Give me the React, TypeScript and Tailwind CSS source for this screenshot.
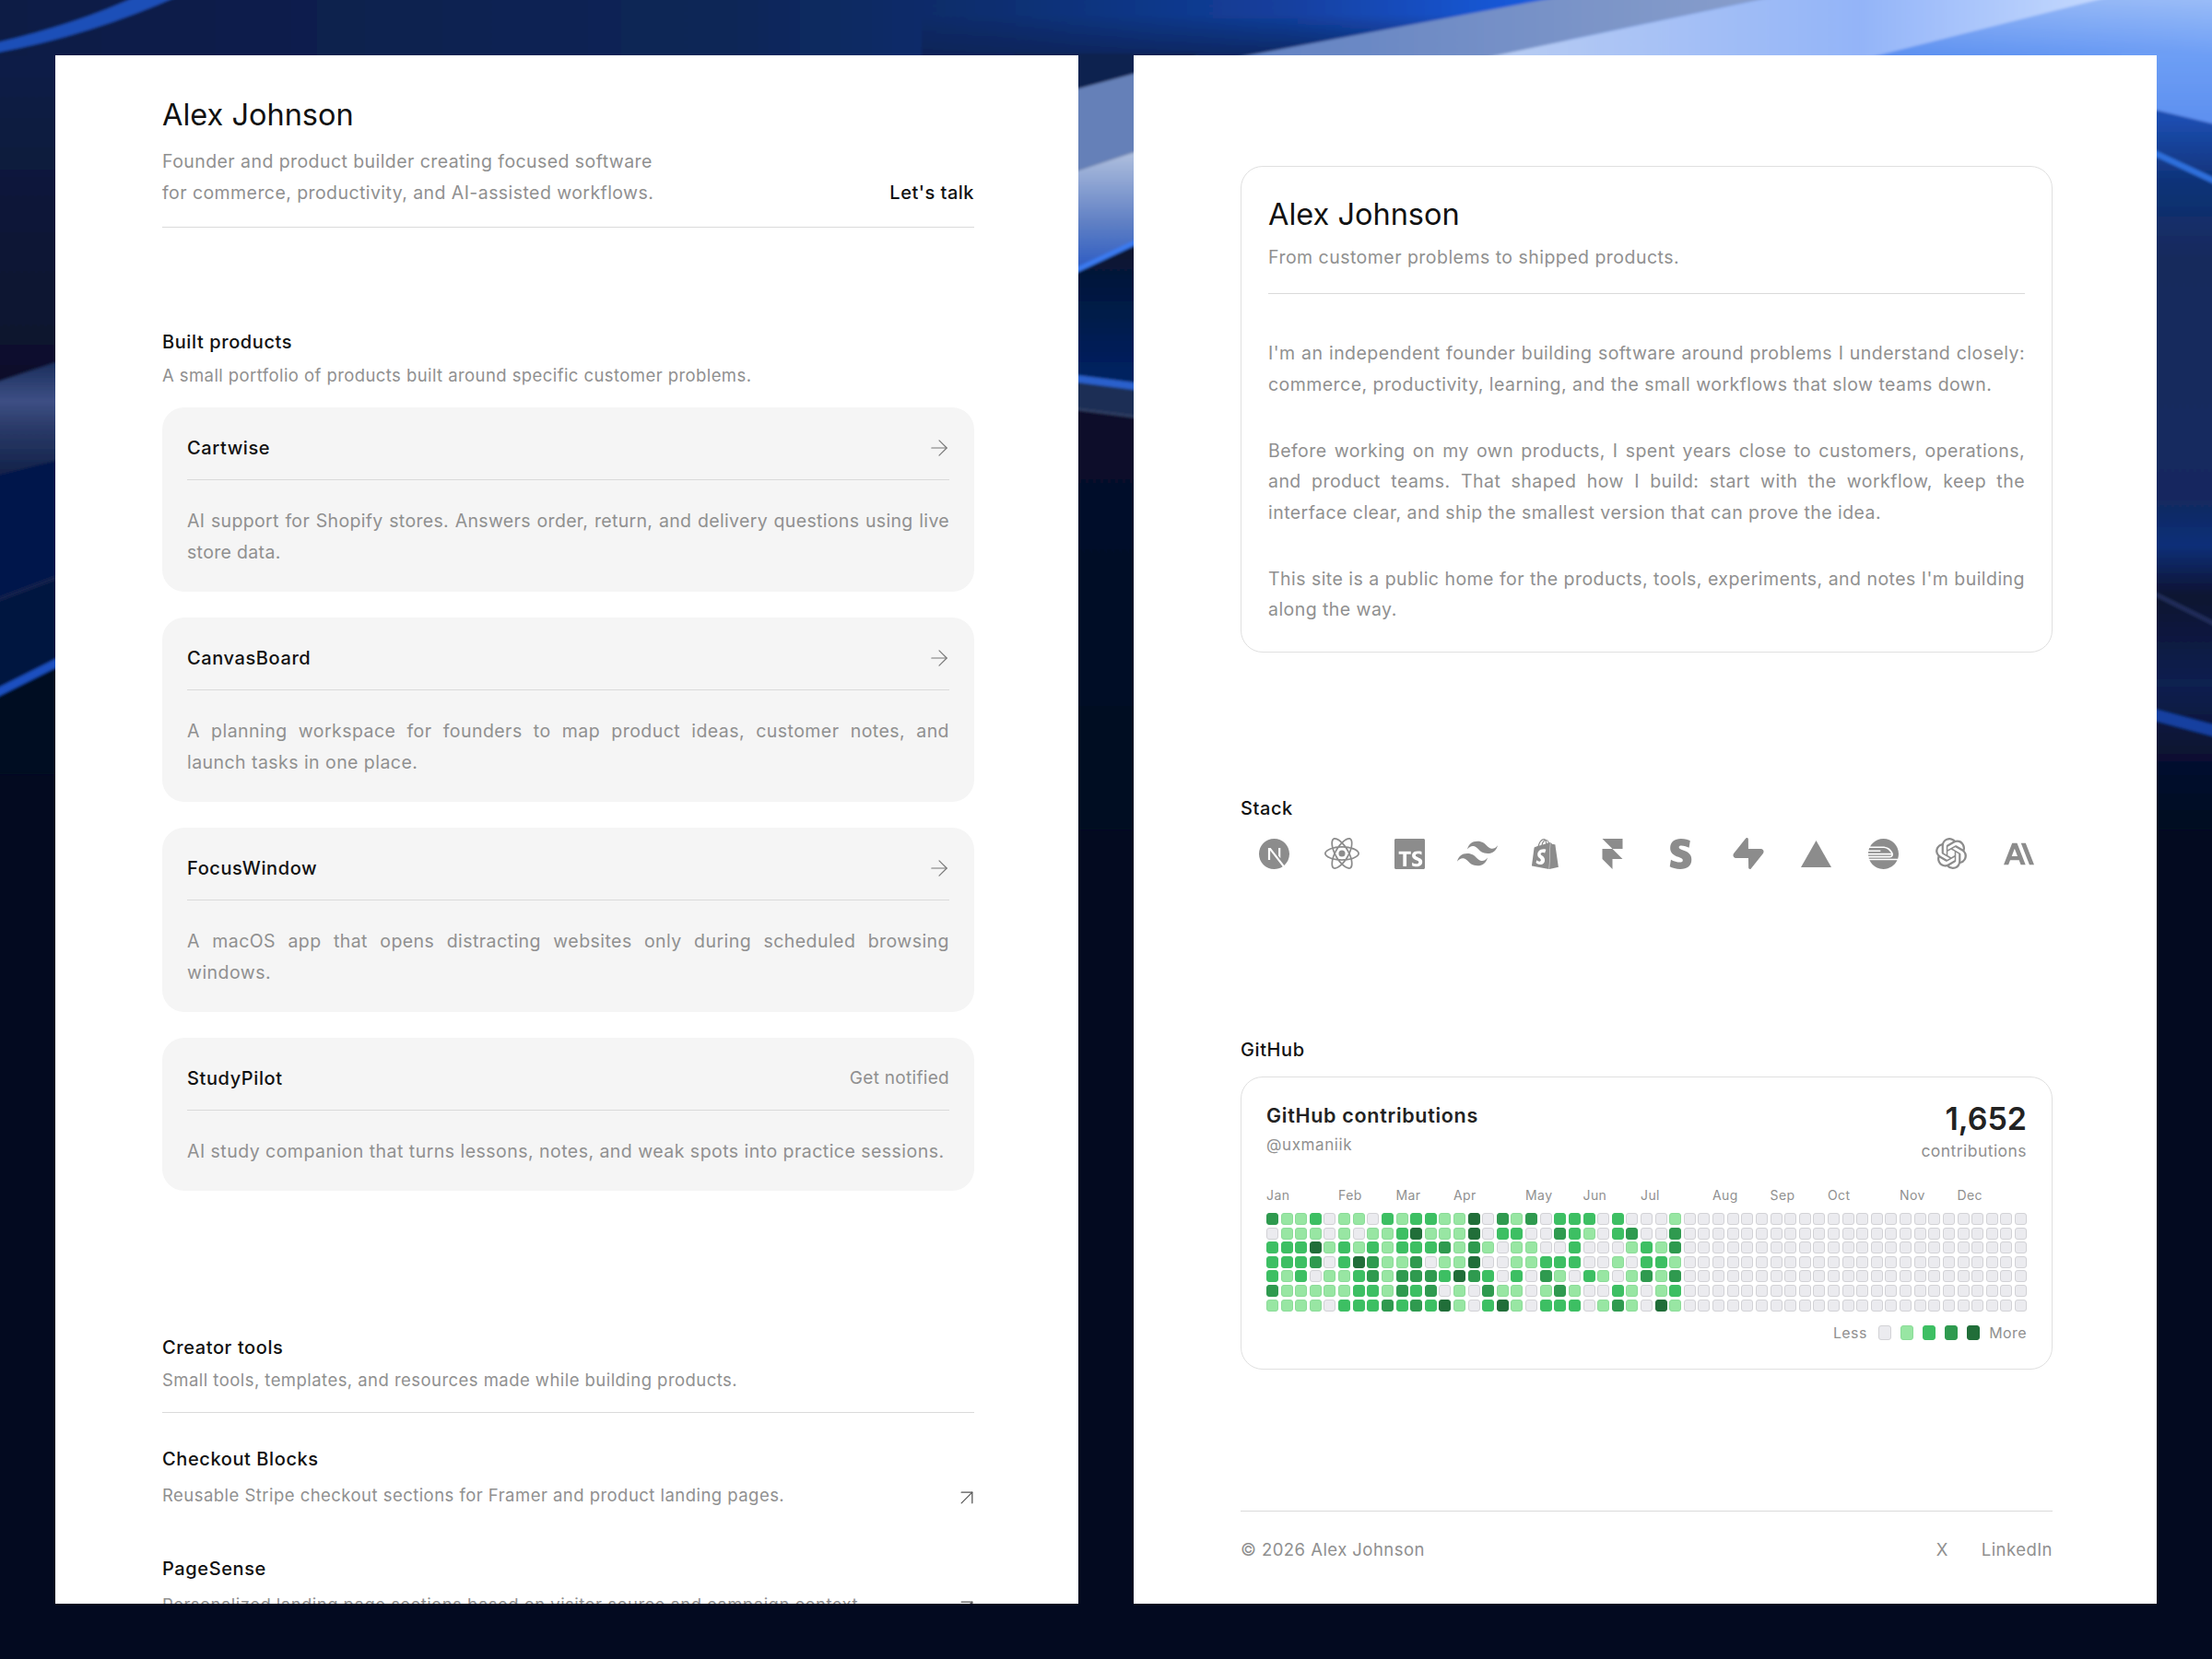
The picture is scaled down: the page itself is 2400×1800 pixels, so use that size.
import { ArrowRight, ArrowUpRight } from 'lucide-react';
import {
  SiNextdotjs,
  SiReact,
  SiTypescript,
  SiTailwindcss,
  SiShopify,
  SiFramer,
  SiStripe,
  SiSupabase,
  SiVercel,
  SiRailway,
  SiOpenai,
  SiAnthropic,
} from 'react-icons/si';

const products = [
  {
    name: 'Cartwise',
    desc: 'AI support for Shopify stores. Answers order, return, and delivery questions using live store data.',
    descClass: 'tracking-[0.33px]',
  },
  {
    name: 'CanvasBoard',
    desc: 'A planning workspace for founders to map product ideas, customer notes, and launch tasks in one place.',
    descClass: 'tracking-[0.45px]',
  },
  {
    name: 'FocusWindow',
    desc: 'A macOS app that opens distracting websites only during scheduled browsing windows.',
    descClass: 'tracking-[0.45px]',
  },
  {
    name: 'StudyPilot',
    desc: 'AI study companion that turns lessons, notes, and weak spots into practice sessions.',
    descClass: 'tracking-[0.47px]',
    soon: true,
  },
];

const tools = [
  { name: 'Checkout Blocks', desc: 'Reusable Stripe checkout sections for Framer and product landing pages.' },
  { name: 'PageSense', desc: 'Personalized landing page sections based on visitor source and campaign context.' },
];

const stack = [
  { Icon: SiNextdotjs, size: 33 },
  { Icon: SiReact, size: 38 },
  { Icon: SiTypescript, size: 33 },
  { Icon: SiTailwindcss, size: 44 },
  { Icon: SiShopify, size: 33 },
  { Icon: SiFramer, size: 33 },
  { Icon: SiStripe, size: 33 },
  { Icon: SiSupabase, size: 34 },
  { Icon: SiVercel, size: 33 },
  { Icon: SiRailway, size: 33 },
  { Icon: SiOpenai, size: 34 },
  { Icon: SiAnthropic, size: 33 },
];

const months = [
  { label: 'Jan', col: 0 },
  { label: 'Feb', col: 5 },
  { label: 'Mar', col: 9 },
  { label: 'Apr', col: 13 },
  { label: 'May', col: 18 },
  { label: 'Jun', col: 22 },
  { label: 'Jul', col: 26 },
  { label: 'Aug', col: 31 },
  { label: 'Sep', col: 35 },
  { label: 'Oct', col: 39 },
  { label: 'Nov', col: 44 },
  { label: 'Dec', col: 48 },
];

const rows = [
  '31120110212211403130222020001',
  '01110101124111402200321023003',
  '22241212122231310110020001213',
  '22230243113011400112220010221',
  '21201123133324320203102101313',
  '31111122132301031101310021012',
  '11110222323241024102220131041',
];

const levels = [
  'bg-[#ebebef] border border-[#d2d2d6]',
  'bg-[#98e6a3] border border-[#8bdc98]',
  'bg-[#3dbf63] border border-[#3dbf63]',
  'bg-[#2f9a4f] border border-[#2f9a4f]',
  'bg-[#216e39] border border-[#216e39]',
];

const cells = rows.flatMap((row) => row.padEnd(53, '0').split('').map(Number));

function Wallpaper() {
  return (
    <svg viewBox="0 0 2400 1800" className="absolute inset-0 w-full h-full">
      <defs>
        <linearGradient id="topBlue" x1="0" y1="0" x2="1" y2="0">
          <stop offset="0" stopColor="#0a1a44" />
          <stop offset="0.2" stopColor="#0d2150" />
          <stop offset="0.33" stopColor="#0f2656" />
          <stop offset="0.45" stopColor="#0f2e70" />
          <stop offset="0.58" stopColor="#123f9e" />
          <stop offset="0.68" stopColor="#1758d8" />
          <stop offset="0.84" stopColor="#5b8ff0" />
          <stop offset="1" stopColor="#6e9ff5" />
        </linearGradient>
        <linearGradient id="topShade" gradientUnits="userSpaceOnUse" x1="0" y1="15" x2="0" y2="60">
          <stop offset="0" stopColor="#0a2050" stopOpacity="0" />
          <stop offset="1" stopColor="#0a2050" stopOpacity="0.75" />
        </linearGradient>
        <linearGradient id="topGlow" gradientUnits="userSpaceOnUse" x1="0" y1="0" x2="0" y2="60">
          <stop offset="0" stopColor="#ffffff" stopOpacity="0.3" />
          <stop offset="1" stopColor="#ffffff" stopOpacity="0" />
        </linearGradient>
        <linearGradient id="greyBand" x1="0" y1="0" x2="1" y2="0">
          <stop offset="0" stopColor="#5f80c2" />
          <stop offset="1" stopColor="#8a9fcb" />
        </linearGradient>
        <linearGradient id="lightBand" x1="0" y1="0" x2="1" y2="0">
          <stop offset="0" stopColor="#bccff2" />
          <stop offset="0.6" stopColor="#93b4f8" />
          <stop offset="1" stopColor="#cbdeff" />
        </linearGradient>
        <linearGradient id="leftBase" gradientUnits="userSpaceOnUse" x1="0" y1="55" x2="0" y2="400">
          <stop offset="0" stopColor="#0d1d48" />
          <stop offset="0.5" stopColor="#0a1838" />
          <stop offset="1" stopColor="#07102c" />
        </linearGradient>
        <linearGradient id="leftBand" gradientUnits="userSpaceOnUse" x1="0" y1="395" x2="0" y2="510">
          <stop offset="0" stopColor="#1c2f5e" />
          <stop offset="0.35" stopColor="#3d4f84" />
          <stop offset="0.6" stopColor="#2a3a68" />
          <stop offset="1" stopColor="#14244c" />
        </linearGradient>
        <linearGradient id="gapBand" gradientUnits="userSpaceOnUse" x1="0" y1="170" x2="0" y2="290">
          <stop offset="0" stopColor="#aabbdc" />
          <stop offset="0.6" stopColor="#5f7fc4" />
          <stop offset="1" stopColor="#2e5cc2" />
        </linearGradient>
        <linearGradient id="gapLow" gradientUnits="userSpaceOnUse" x1="0" y1="280" x2="0" y2="400">
          <stop offset="0" stopColor="#071533" />
          <stop offset="1" stopColor="#00205e" />
        </linearGradient>
        <linearGradient id="gapDark" gradientUnits="userSpaceOnUse" x1="0" y1="440" x2="0" y2="860">
          <stop offset="0" stopColor="#070e2c" />
          <stop offset="1" stopColor="#030822" />
        </linearGradient>
        <linearGradient id="rightLight" gradientUnits="userSpaceOnUse" x1="0" y1="55" x2="0" y2="130">
          <stop offset="0" stopColor="#6e9ff5" />
          <stop offset="1" stopColor="#5e90f0" />
        </linearGradient>
        <linearGradient id="rightDeep" gradientUnits="userSpaceOnUse" x1="0" y1="110" x2="0" y2="900">
          <stop offset="0.025" stopColor="#1c4db0" />
          <stop offset="0.11" stopColor="#0f3278" />
          <stop offset="0.215" stopColor="#142a5c" />
          <stop offset="0.545" stopColor="#12285e" />
          <stop offset="0.61" stopColor="#0e2f78" />
          <stop offset="0.68" stopColor="#0b1230" />
          <stop offset="0.8" stopColor="#0e2050" />
          <stop offset="0.886" stopColor="#071233" />
          <stop offset="1" stopColor="#030a20" />
        </linearGradient>
        <filter id="soft">
          <feGaussianBlur stdDeviation="1.5" />
        </filter>
      </defs>
      <rect width="2400" height="1800" fill="#030a20" />
      <g filter="url(#soft)">
        {/* top strip */}
        <rect x="-20" y="-20" width="2440" height="90" fill="url(#topBlue)" />
        <rect x="1000" y="15" width="700" height="55" fill="url(#topShade)" />
        <rect x="2000" y="-20" width="420" height="80" fill="url(#topGlow)" />
        <path d="M-20 50 Q80 28 150 -5 L195 -5 Q90 42 -20 60 Z" fill="#1c4fb8" />
        <path d="M1301 70 L1727 -10 L1955 -10 L1575 70 Z" fill="url(#greyBand)" />
        <path d="M1575 70 L1955 -10 L2315 -10 L1998 70 Z" fill="url(#lightBand)" />

        {/* left strip */}
        <rect x="-20" y="62" width="120" height="760" fill="url(#leftBase)" />
        <path d="M-20 420 L100 380 V490 L-20 520 Z" fill="url(#leftBand)" />
        <path d="M-20 520 L100 490 V620 L-20 655 Z" fill="#04184c" />
        <path d="M-20 655 L100 610 V705 L-20 755 Z" fill="#021240" />
        <path d="M-20 655 L100 610 V614 L-20 659 Z" fill="#14244e" />
        <path d="M-20 755 L100 695 V705 L-20 765 Z" fill="#1a50c0" />
        <path d="M-20 765 L100 705 V840 H-20 Z" fill="#030a20" />

        {/* gap between panels */}
        <rect x="1100" y="58" width="200" height="100" fill="#0f2350" />
        <path d="M1100 115 L1300 61 V142 L1100 208 Z" fill="#6580b8" />
        <path d="M1100 208 L1300 142 V231 L1100 325 Z" fill="url(#gapBand)" />
        <path d="M1100 325 L1300 231 V440 H1100 Z" fill="url(#gapLow)" />
        <path d="M1100 322 L1300 228 V234 L1100 328 Z" fill="#3a7af0" />
        <path d="M1100 404 L1300 430 V462 L1100 436 Z" fill="#1a2d55" />
        <path d="M1100 398 L1300 424 V432 L1100 406 Z" fill="#2a60cc" />
        <path d="M1100 434 L1300 460 V900 H1100 Z" fill="url(#gapDark)" />
        <path d="M1100 434 L1300 460 V462 L1100 436 Z" fill="#3a4a70" />

        {/* right strip */}
        <rect x="2300" y="58" width="150" height="100" fill="url(#rightLight)" />
        <path d="M2300 110 L2450 146 V900 H2300 Z" fill="url(#rightDeep)" />
        <path d="M2300 145 L2450 215 V222 L2300 152 Z" fill="#2f6fdc" />
        <path d="M2300 623 L2450 698 V703 L2300 628 Z" fill="#232f5c" />
        <path d="M2300 759 L2450 799 V812 L2300 772 Z" fill="#123fa0" />
      </g>
    </svg>
  );
}

function SectionTitle({ children }: { children: React.ReactNode }) {
  return <h2 className="text-[20px] leading-[28px] font-medium text-[#111] tracking-[0.6px]">{children}</h2>;
}

function ProductCard({ name, desc, descClass, soon }: { name: string; desc: string; descClass: string; soon?: boolean }) {
  return (
    <div className="bg-[#f5f5f5] rounded-3xl px-[27px] pt-[30px] pb-[26px]">
      <div className="flex items-center justify-between pb-[20px] border-b border-[#dadada] h-[49px]">
        <span className="text-[20px] leading-[28px] font-medium text-[#111] tracking-[0.6px]">{name}</span>
        {soon ? (
          <span className="text-[19px] leading-[28px] text-[#909090] tracking-[0.3px]">Get notified</span>
        ) : (
          <ArrowRight size={28} strokeWidth={1} className="text-[#777] -mr-[3px]" />
        )}
      </div>
      <p className={`mt-[27px] text-[19.5px] leading-[34px] text-[#909090] text-justify ${descClass}`}>{desc}</p>
    </div>
  );
}

export default function App() {
  return (
    <div className="relative w-[2400px] h-[1800px] overflow-hidden bg-[#030a20] font-['Inter',sans-serif]">
      <Wallpaper />
      <div className="relative flex gap-[60px] p-[60px]">
        <div className="w-[1110px] h-[1680px] bg-white overflow-hidden pl-[116px] pr-[113px] pt-[45px]">
          <h1 className="text-[32.5px] leading-[40px] font-normal text-[#111]">Alex Johnson</h1>
          <div className="flex items-end justify-between mt-[13px] pb-[20px] border-b border-[#dadada]">
            <p className="text-[19.5px] leading-[34px] text-[#909090] tracking-[0.43px]">
              Founder and product builder creating focused software
              <br />
              for commerce, productivity, and AI-assisted workflows.
            </p>
            <span className="text-[20px] leading-[34px] font-medium text-[#111] tracking-[0.5px]">Let's talk</span>
          </div>

          <div className="mt-[110px]">
            <SectionTitle>Built products</SectionTitle>
            <p className="mt-[8px] text-[18.5px] leading-[28px] text-[#909090] tracking-[0.42px]">
              A small portfolio of products built around specific customer problems.
            </p>
          </div>
          <div className="mt-[21px] flex flex-col gap-[28px]">
            {products.map((p) => (
              <ProductCard key={p.name} {...p} />
            ))}
          </div>

          <div className="mt-[156px] pb-[21px] border-b border-[#dadada]">
            <SectionTitle>Creator tools</SectionTitle>
            <p className="mt-[7px] text-[18.5px] leading-[28px] text-[#909090] tracking-[0.45px]">
              Small tools, templates, and resources made while building products.
            </p>
          </div>
          <div className="mt-[36px] flex flex-col gap-[49px]">
            {tools.map((t) => (
              <div key={t.name}>
                <SectionTitle>{t.name}</SectionTitle>
                <div className="mt-[8px] flex items-center justify-between h-[34px]">
                  <p className="text-[18.5px] leading-[34px] text-[#909090] tracking-[0.46px]">{t.desc}</p>
                  <ArrowUpRight size={28} strokeWidth={1.1} className="text-[#555] translate-y-[3px] -mr-[6px]" />
                </div>
              </div>
            ))}
          </div>
        </div>

        <div className="w-[1110px] h-[1680px] bg-white overflow-hidden pl-[116px] pr-[113px] pt-[120px]">
          <div className="border border-[#e0e0e0] rounded-3xl px-[29px] pt-[30px] pb-[28px] h-[528px]">
            <h1 className="text-[32.5px] leading-[44px] font-normal text-[#111]">Alex Johnson</h1>
            <p className="mt-[10px] pb-[25px] border-b border-[#dadada] text-[19.5px] leading-[28px] text-[#909090] tracking-[0.47px]">
              From customer problems to shipped products.
            </p>
            <div className="mt-[48px] flex flex-col gap-[38.5px] text-[19.5px] leading-[33.5px] text-[#909090] text-justify tracking-[0.45px]">
              <p>
                I'm an independent founder building software around problems I understand closely: commerce,
                productivity, learning, and the small workflows that slow teams down.
              </p>
              <p>
                Before working on my own products, I spent years close to customers, operations, and product teams.
                That shaped how I build: start with the workflow, keep the interface clear, and ship the smallest
                version that can prove the idea.
              </p>
              <p>
                This site is a public home for the products, tools, experiments, and notes I'm building along the way.
              </p>
            </div>
          </div>

          <div className="mt-[155px]">
            <SectionTitle>Stack</SectionTitle>
          </div>
          <div className="mt-[13px] grid grid-cols-12 h-[44px] items-center justify-items-center text-[#8c8c8c]">
            {stack.map(({ Icon, size }, i) => (
              <Icon key={i} size={size} />
            ))}
          </div>

          <div className="mt-[177px]">
            <SectionTitle>GitHub</SectionTitle>
          </div>
          <div className="mt-[15px] h-[318px] border border-[#e0e0e0] rounded-3xl px-[27px] pt-[25px]">
            <div className="flex items-start justify-between">
              <div className="pt-[2px]">
                <div className="text-[21.5px] leading-[28px] font-semibold text-[#222] tracking-[0.7px]">GitHub contributions</div>
                <div className="mt-[6px] text-[17px] leading-[24px] text-[#909090] tracking-[0.6px]">@uxmaniik</div>
              </div>
              <div className="text-right">
                <div className="text-[34px] leading-[40px] font-semibold text-[#222]">1,652</div>
                <div className="mt-[3px] text-[17.5px] leading-[24px] text-[#909090] tracking-[0.45px]">contributions</div>
              </div>
            </div>
            <div className="mt-[26px] grid grid-cols-[repeat(53,minmax(0,1fr))] gap-x-[2.6px] h-[20px] text-[14px] leading-[20px] text-[#909090] tracking-[0.4px]">
              {months.map((m) => (
                <span key={m.label} className="row-start-1 whitespace-nowrap" style={{ gridColumnStart: m.col + 1 }}>
                  {m.label}
                </span>
              ))}
            </div>
            <div className="mt-[9px] grid grid-cols-[repeat(53,minmax(0,1fr))] auto-rows-[13px] gap-x-[2.6px] gap-y-[2.6px]">
              {cells.map((lvl, i) => (
                <div key={i} className={`rounded-[3px] ${levels[lvl]}`} />
              ))}
            </div>
            <div className="mt-[15px] flex items-center justify-end text-[16px] leading-[16px] text-[#909090] tracking-[0.4px]">
              <span className="mr-[12px]">Less</span>
              <div className="flex gap-[9.5px]">
                {levels.map((l) => (
                  <div key={l} className={`w-[14.5px] h-[16px] rounded-[3px] ${l}`} />
                ))}
              </div>
              <span className="ml-[10px]">More</span>
            </div>
          </div>

          <div className="mt-[153px] pt-[27px] border-t border-[#dadada] flex justify-between text-[18.5px] leading-[28px] text-[#909090] tracking-[0.45px]">
            <span>© 2026 Alex Johnson</span>
            <div className="flex gap-[36px]">
              <span>X</span>
              <span>LinkedIn</span>
            </div>
          </div>
        </div>
      </div>
    </div>
  );
}
